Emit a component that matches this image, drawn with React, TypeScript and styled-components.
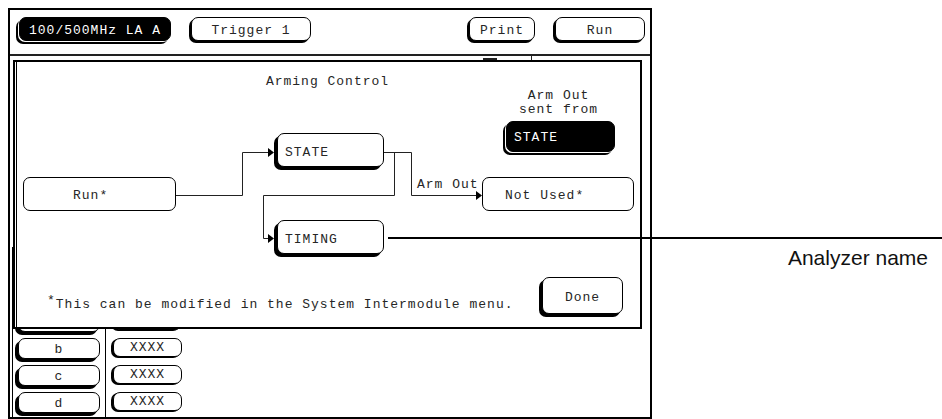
import React from 'react';
import styled, {createGlobalStyle, css} from 'styled-components';

const GlobalStyle = createGlobalStyle`
  html, body {
    margin: 0;
    padding: 0;
    background: #fff;
  }
  body {
    font-family: "Liberation Mono", "DejaVu Sans Mono", monospace;
    font-size: 13px;
    color: #222;
  }
`;

const monoText = css`
  font-family: "Liberation Mono", "DejaVu Sans Mono", monospace;
  font-size: 13px;
  line-height: 14px;
  letter-spacing: 1px;
  white-space: pre;
  color: #262626;
`;

const Stage = styled.div`
  position: relative;
  display: flex;
  align-items: flex-start;
  width: 942px;
  height: 419px;
  overflow: hidden;
  background: #fff;
`;

const Screen = styled.div`
  position: relative;
  box-sizing: border-box;
  flex: none;
  width: 644px;
  height: 411px;
  margin: 8px 0 0 8px;
  border: 2px solid #000;
  display: flex;
  flex-direction: column;
`;

const TopBar = styled.div`
  box-sizing: border-box;
  height: 44px;
  padding: 7px 5px 0 9px;
  display: flex;
  align-items: flex-start;
  gap: 20px;
`;

const Spacer = styled.div`
  flex: 1;
`;

const Rule = styled.div`
  height: 2px;
  background: #222;
`;

const keyShape = css`
  ${monoText};
  box-sizing: border-box;
  border: 1px solid #000;
  border-radius: 7px;
  display: flex;
  align-items: center;
  padding-top: 3px;
`;

const TopKey = styled.div<{$w: number; $dark?: boolean}>`
  ${keyShape};
  width: ${p => p.$w}px;
  height: 24px;
  justify-content: center;
  background: ${p => (p.$dark ? '#000' : '#fff')};
  color: ${p => (p.$dark ? '#fff' : '#262626')};
  box-shadow: ${p => (p.$dark ? '-1px 1px 0 #fff, -3px 3px 0 #000' : '-2px 2px 0 #000')};
`;

const Body = styled.div`
  flex: 1;
  display: flex;
  flex-direction: column;
  justify-content: space-between;
`;

/* bits of the screen underneath the dialog that peek out above it */
const HiddenStrip = styled.div`
  display: flex;
  align-items: flex-start;
  height: 6px;
  padding-left: 473px;
`;

const HiddenTab = styled.div`
  width: 14px;
  height: 3px;
  margin-top: 2px;
  background: #222;
`;

const HiddenEdge = styled.div`
  width: 1px;
  height: 6px;
  margin-left: 34px;
  background: #222;
`;

const ListArea = styled.div`
  display: flex;
  height: 170px;
  margin-left: 2px;
`;

const NameCol = styled.div`
  box-sizing: border-box;
  width: 94px;
  padding: 0 5px 4px 5px;
  border-left: 1px solid #000;
  border-right: 1px solid #000;
  display: flex;
  flex-direction: column;
  justify-content: flex-end;
  gap: 6px;
`;

const NameKey = styled.div`
  ${keyShape};
  height: 21px;
  justify-content: center;
  background: #fff;
  box-shadow: -3px 3px 0 #000;
`;

const ValueCol = styled.div`
  box-sizing: border-box;
  padding: 0 0 6px 7px;
  display: flex;
  flex-direction: column;
  justify-content: flex-end;
  gap: 8px;
`;

const ValueKey = styled.div`
  ${keyShape};
  width: 69px;
  height: 19px;
  padding-top: 1px;
  justify-content: center;
  background: #fff;
  box-shadow: -2px 1px 0 #000;
`;

const Dialog = styled.div`
  position: absolute;
  left: 3px;
  top: 50px;
  z-index: 2;
  box-sizing: border-box;
  width: 629px;
  height: 269px;
  background: #fff;
  border: 2px solid #000;
  box-shadow: inset 1px 0 0 #fff, inset 2px 0 0 #000;
  display: flex;
  flex-direction: column;
`;

const Title = styled.div`
  ${monoText};
  box-sizing: border-box;
  height: 25px;
  padding-top: 13px;
  text-align: center;
`;

const Diagram = styled.div`
  position: relative;
  flex: 1;
`;

const Wires = styled.svg`
  position: absolute;
  left: 0;
  top: 0;
  overflow: visible;
  pointer-events: none;
`;

const Node = styled.div<{$x: number; $y: number; $w: number; $h: number; $pad: number; $shadow?: boolean}>`
  ${keyShape};
  position: absolute;
  left: ${p => p.$x}px;
  top: ${p => p.$y}px;
  width: ${p => p.$w}px;
  height: ${p => p.$h}px;
  padding-left: ${p => p.$pad}px;
  padding-top: ${p => (p.$shadow ? 5 : 3)}px;
  background: #fff;
  box-shadow: ${p => (p.$shadow ? '-3px 3px 0 #000' : 'none')};
`;

const SourceLabel = styled.div`
  ${monoText};
  position: absolute;
  left: 487px;
  top: 2px;
  width: 113px;
  text-align: center;
`;

const SourceField = styled.div`
  ${keyShape};
  position: absolute;
  left: 491px;
  top: 34px;
  width: 109px;
  height: 31px;
  padding-left: 7px;
  background: #000;
  color: #fff;
  box-shadow: -1px 1px 0 #fff, -3px 3px 0 #000;
`;

const WireLabel = styled.div`
  ${monoText};
  position: absolute;
  left: 402px;
  top: 91px;
`;

const Footer = styled.div`
  display: flex;
  align-items: flex-end;
  justify-content: space-between;
  padding: 0 17px 13px 32px;
`;

const Footnote = styled.div`
  ${monoText};
  margin-bottom: 2px;
`;

const Star = styled.span`
  position: relative;
  top: -4px;
`;

const DoneKey = styled.div`
  ${keyShape};
  width: 81px;
  height: 37px;
  justify-content: center;
  background: #fff;
  box-shadow: -3px 3px 0 #000;
  padding-top: 5px;
`;

const Callout = styled.div`
  position: absolute;
  left: 388px;
  right: 0;
  top: 237px;
  height: 2px;
  background: #000;
  z-index: 10;
`;

const Annotation = styled.div`
  flex: 1;
  padding: 247px 14px 0 0;
  text-align: right;
  font-family: "Liberation Sans", Arial, sans-serif;
  font-size: 21px;
  line-height: 21px;
  color: #111;
`;

const rows = ['a', 'b', 'c', 'd'];

const Arrow = ({x, y}: {x: number; y: number}) => (
  <polygon points={`${x - 6},${y - 4.5} ${x},${y} ${x - 6},${y + 4.5}`} fill="#000" />
);

export default function App() {
  return (
    <>
      <GlobalStyle />
      <Stage>
        <Screen>
          <TopBar>
            <TopKey $w={152} $dark>100/500MHz LA A</TopKey>
            <TopKey $w={120}>Trigger 1</TopKey>
            <Spacer />
            <TopKey $w={66}>Print</TopKey>
            <TopKey $w={90}>Run</TopKey>
          </TopBar>
          <Rule />
          <Body>
            <HiddenStrip>
              <HiddenTab />
              <HiddenEdge />
            </HiddenStrip>
            <ListArea>
              <NameCol>
                {rows.map(r => (
                  <NameKey key={r}>{r}</NameKey>
                ))}
              </NameCol>
              <ValueCol>
                {rows.map(r => (
                  <ValueKey key={r}>XXXX</ValueKey>
                ))}
              </ValueCol>
            </ListArea>
          </Body>

          <Dialog>
            <Title>Arming Control</Title>
            <Diagram>
              <Wires width="612" height="190">
                <g stroke="#222" strokeWidth="1" fill="none">
                  <polyline points="161,108.5 227.5,108.5 227.5,65.5 254,65.5" />
                  <polyline points="369,65.5 396.5,65.5 396.5,108.5 462,108.5" />
                  <polyline points="379.5,65.5 379.5,108.5 248.5,108.5 248.5,151.5 254,151.5" />
                </g>
                <Arrow x={259} y={65.5} />
                <Arrow x={467} y={108.5} />
                <Arrow x={259} y={151.5} />
              </Wires>
              <Node $x={8} $y={90} $w={153} $h={34} $pad={49}>Run*</Node>
              <Node $x={262} $y={46} $w={107} $h={34} $pad={7} $shadow>STATE</Node>
              <Node $x={262} $y={133} $w={107} $h={34} $pad={7} $shadow>TIMING</Node>
              <Node $x={467} $y={90} $w={152} $h={34} $pad={22}>Not Used*</Node>
              <WireLabel>Arm Out</WireLabel>
              <SourceLabel>
                Arm Out
                {'\n'}sent from
              </SourceLabel>
              <SourceField>STATE</SourceField>
            </Diagram>
            <Footer>
              <Footnote>
                <Star>*</Star>This can be modified in the System Intermodule menu.
              </Footnote>
              <DoneKey>Done</DoneKey>
            </Footer>
          </Dialog>
        </Screen>
        <Annotation>Analyzer name</Annotation>
        <Callout />
      </Stage>
    </>
  );
}
